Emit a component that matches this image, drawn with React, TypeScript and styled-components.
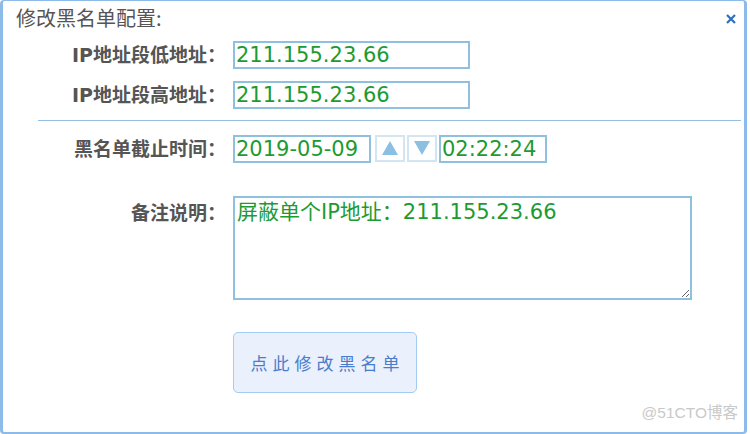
import styled, { createGlobalStyle } from 'styled-components';

const GlobalStyle = createGlobalStyle`
  html, body {
    margin: 0;
    padding: 0;
    background: #ffffff;
  }
  body {
    font-family: "DejaVu Sans", "Noto Sans CJK SC", sans-serif;
  }
`;

const FIELD_FONT = `"DejaVu Sans", "Noto Sans CJK SC", sans-serif`;

function App() {
  return (
    <>
      <GlobalStyle />
      <Dialog>
        <Header>
          <Title>修改黑名单配置:</Title>
          <CloseButton aria-label="关闭">
            <svg width="10" height="10" viewBox="0 0 10 10">
              <path d="M1 1 L9 9 M9 1 L1 9" stroke="#2a6fc6" strokeWidth="2.2" />
            </svg>
          </CloseButton>
        </Header>

        <Row>
          <Label>IP地址段低地址：</Label>
          <TextInput width={237} defaultValue="211.155.23.66" />
        </Row>
        <Row gapTop={12}>
          <Label>IP地址段高地址：</Label>
          <TextInput width={237} defaultValue="211.155.23.66" />
        </Row>

        <Divider />

        <Row gapTop={14}>
          <Label>黑名单截止时间：</Label>
          <Controls>
            <TextInput width={138} defaultValue="2019-05-09" />
            <SpinButton aria-label="up">
              <svg width="16" height="14" viewBox="0 0 16 14">
                <path d="M8 0 L16 14 L0 14 Z" fill="#8cc0e2" />
              </svg>
            </SpinButton>
            <SpinButton aria-label="down">
              <svg width="16" height="14" viewBox="0 0 16 14">
                <path d="M0 0 L16 0 L8 14 Z" fill="#8cc0e2" />
              </svg>
            </SpinButton>
            <TextInput width={108} defaultValue="02:22:24" />
          </Controls>
        </Row>

        <Row gapTop={33} alignTop>
          <Label topPad={5}>备注说明：</Label>
          <Note defaultValue="屏蔽单个IP地址：211.155.23.66" />
        </Row>

        <SubmitRow>
          <SubmitButton>点此修改黑名单</SubmitButton>
        </SubmitRow>

        <Watermark>@51CTO博客</Watermark>
      </Dialog>
    </>
  );
}

export default App;

const Dialog = styled.div`
  position: relative;
  box-sizing: border-box;
  width: 747px;
  height: 434px;
  border-style: solid;
  border-color: #8dbbe9;
  border-width: 1px 3px 2px 3px;
  border-radius: 4px;
  background: #ffffff;
`;

const Header = styled.div`
  display: flex;
  justify-content: space-between;
  align-items: flex-start;
  height: 40px;
  padding: 5px 8px 0 13px;
  box-sizing: border-box;
`;

const Title = styled.div`
  font-family: "Noto Sans CJK SC", sans-serif;
  font-size: 20px;
  line-height: 24px;
  color: #555555;
`;

const CloseButton = styled.button`
  border: none;
  background: transparent;
  padding: 0;
  margin-top: 8px;
  width: 10px;
  height: 10px;
  display: flex;
  cursor: pointer;
`;

const Row = styled.div<{ gapTop?: number; alignTop?: boolean }>`
  display: grid;
  grid-template-columns: 223px auto;
  column-gap: 7px;
  align-items: ${(p) => (p.alignTop ? 'start' : 'center')};
  margin-top: ${(p) => p.gapTop ?? 0}px;
`;

const Label = styled.div<{ topPad?: number }>`
  text-align: right;
  font-family: "DejaVu Sans", "Noto Sans CJK SC", sans-serif;
  font-weight: bold;
  font-size: 19px;
  line-height: 24px;
  color: #555555;
  padding-top: ${(p) => p.topPad ?? 0}px;
  white-space: nowrap;
`;

const TextInput = styled.input<{ width: number }>`
  box-sizing: border-box;
  width: ${(p) => p.width}px;
  height: 28px;
  border: 2px solid #8fc0de;
  padding: 0 1px;
  margin: 0;
  font-family: ${FIELD_FONT};
  font-size: 21px;
  color: #1c9b32;
  outline: none;
`;

const Controls = styled.div`
  display: flex;
  align-items: center;
`;

const SpinButton = styled.button`
  box-sizing: border-box;
  width: 30px;
  height: 27px;
  margin-left: 4px;
  margin-top: -2px;
  padding: 0;
  border: 2px solid #d3e5f1;
  background: #ffffff;
  display: flex;
  align-items: center;
  justify-content: center;
  & + & {
    margin-left: 2px;
    margin-right: 2px;
  }
`;

const Divider = styled.div`
  height: 1px;
  margin: 11px 3px 0 35px;
  background: #94bfe2;
`;

const Note = styled.textarea`
  box-sizing: border-box;
  width: 459px;
  height: 104px;
  border: 2px solid #8fc0de;
  padding: 2px 2px;
  margin: 0;
  font-family: ${FIELD_FONT};
  font-size: 21px;
  line-height: 24px;
  color: #1c9b32;
  outline: none;
`;

const SubmitRow = styled.div`
  display: flex;
  padding-left: 230px;
  margin-top: 32px;
`;

const SubmitButton = styled.button`
  box-sizing: border-box;
  width: 184px;
  height: 61px;
  border: 1px solid #a4cbf3;
  border-radius: 5px;
  background: #ebf0fd;
  color: #4a7ccb;
  font-family: "Noto Sans CJK SC", sans-serif;
  font-size: 17px;
  letter-spacing: 5px;
  padding: 0 0 0 5px;
  cursor: pointer;
`;

const Watermark = styled.div`
  position: absolute;
  right: 6px;
  bottom: 10px;
  font-family: "Liberation Sans", "Noto Sans CJK SC", sans-serif;
  font-size: 15.5px;
  color: #c9c9c9;
`;
